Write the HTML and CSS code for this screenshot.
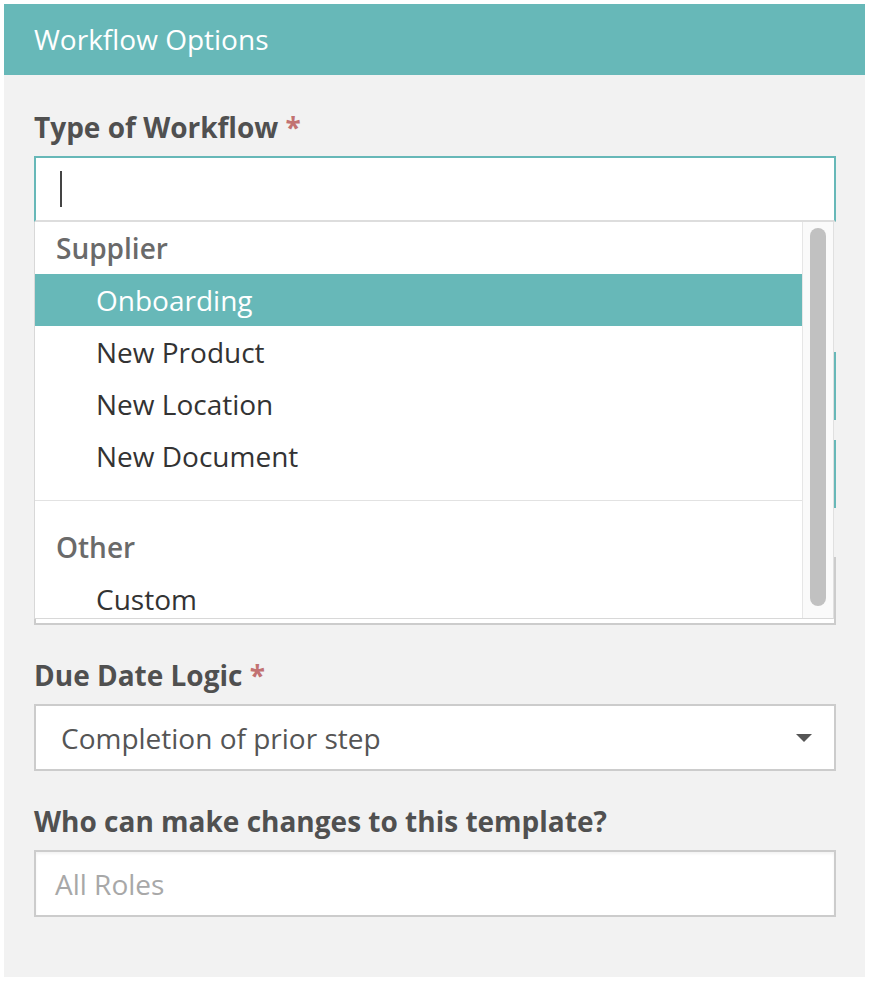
FILE: index.html
```html
<!DOCTYPE html>
<html>
<head>
<meta charset="utf-8">
<link rel="stylesheet" href="styles.css">
</head>
<body>
<div class="panel">
  <div class="panel-header">Workflow Options</div>
  <div class="panel-body">
    <div class="field field-type">
      <div class="label">Type of Workflow <span class="req">*</span></div>
      <div class="combo">
        <div class="text-input focused"><span class="caret"></span></div>
        <div class="dropdown">
          <div class="dd-list">
            <div class="group">
              <div class="group-label">Supplier</div>
              <div class="option active">Onboarding</div>
              <div class="option">New Product</div>
              <div class="option">New Location</div>
              <div class="option">New Document</div>
            </div>
            <div class="group group-next">
              <div class="group-label">Other</div>
              <div class="option">Custom</div>
            </div>
          </div>
          <div class="dd-scroll"><div class="dd-thumb"></div></div>
        </div>
      </div>
      <div class="ghost ghost-label1"></div>
      <div class="ghost ghost-btn ghost-btn1"></div>
      <div class="ghost ghost-btn ghost-btn2"></div>
      <div class="ghost ghost-label2"></div>
      <div class="ghost ghost-input"></div>
    </div>

    <div class="field">
      <div class="label">Due Date Logic <span class="req">*</span></div>
      <div class="select">
        <span class="select-value">Completion of prior step</span>
        <span class="select-arrow"></span>
      </div>
    </div>

    <div class="field field-last">
      <div class="label">Who can make changes to this template?</div>
      <div class="text-input plain"><span class="placeholder">All Roles</span></div>
    </div>
  </div>
</div>
</body>
</html>
```

FILE: styles.css
```css
* { box-sizing: border-box; }
html, body { margin: 0; padding: 0; background: #ffffff; }
body { font-family: "Open Sans", "Noto Sans", sans-serif; }

.panel {
  margin: 4px 0 0 4px;
  width: 861px;
  height: 973px;
  background: #f2f2f2;
}
.panel-header {
  height: 71px;
  line-height: 71px;
  padding-left: 30px;
  background: #67b8b8;
  color: #ffffff;
  font-size: 28px;
}
.panel-body {
  padding: 34px 29px 60px 30px;
}
.field { margin-bottom: 32px; }
.field-last { margin-bottom: 0; }
.label {
  font-size: 28px;
  line-height: 36px;
  font-weight: 700;
  color: #505050;
  margin-bottom: 11px;
}
.req { color: #c27272; }

.combo { position: relative; }
.text-input {
  height: 66px;
  background: #ffffff;
  border: 2px solid #cccccc;
  display: flex;
  align-items: center;
}
.text-input.focused {
  border-color: #67b8b8;
  border-bottom-color: #dddddd;
  padding-left: 24px;
}
.caret {
  display: block;
  width: 2px;
  height: 36px;
  background: #444444;
}
.text-input.plain {
  height: 67px;
  padding-left: 19px;
  box-shadow: inset 0 2px 3px rgba(0,0,0,0.05);
}
.placeholder { font-size: 28px; color: #a8a8a8; }

.dropdown {
  position: absolute;
  left: 0;
  top: 100%;
  width: 800px;
  height: 397px;
  background: #ffffff;
  border-left: 1px solid #d8d8d8;
  border-right: 1px solid #e0e0e0;
  border-bottom: 1px solid #d8d8d8;
  display: flex;
  z-index: 5;
}
.dd-list {
  width: 768px;
  height: 396px;
  overflow: hidden;
}
.group { padding-bottom: 18px; }
.group-next { border-top: 1px solid #e2e2e2; padding-top: 20px; }
.group-label {
  height: 52px;
  line-height: 52px;
  padding-left: 21px;
  font-size: 28px;
  font-weight: 600;
  color: #6a6a6a;
}
.option {
  height: 52px;
  line-height: 52px;
  padding-left: 61px;
  font-size: 28px;
  color: #333333;
}
.option.active { background: #67b8b8; color: #ffffff; }
.dd-scroll {
  width: 31px;
  height: 396px;
  background: #fafafa;
  border-left: 1px solid #e6e6e6;
  padding: 6px 0 0 7px;
}
.dd-thumb {
  width: 16px;
  height: 378px;
  border-radius: 8px;
  background: #c1c1c1;
}

.ghost-label1 { height: 36px; margin-top: 33px; }
.ghost-btn { height: 68px; border: 2px solid #67b8b8; background: #ffffff; }
.ghost-btn1 { margin-top: 61px; }
.ghost-btn2 { margin-top: 20px; }
.ghost-label2 { height: 36px; margin-top: 4px; margin-bottom: 9px; }
.ghost-input { height: 68px; border: 2px solid #cccccc; background: #ffffff; }

.select {
  height: 67px;
  background: #ffffff;
  border: 2px solid #cccccc;
  display: flex;
  align-items: center;
  justify-content: space-between;
  padding: 0 22px 0 25px;
}
.select-value { font-size: 28px; color: #555555; }
.select-arrow {
  width: 0; height: 0;
  border-left: 8px solid transparent;
  border-right: 8px solid transparent;
  border-top: 8px solid #555555;
}
```
